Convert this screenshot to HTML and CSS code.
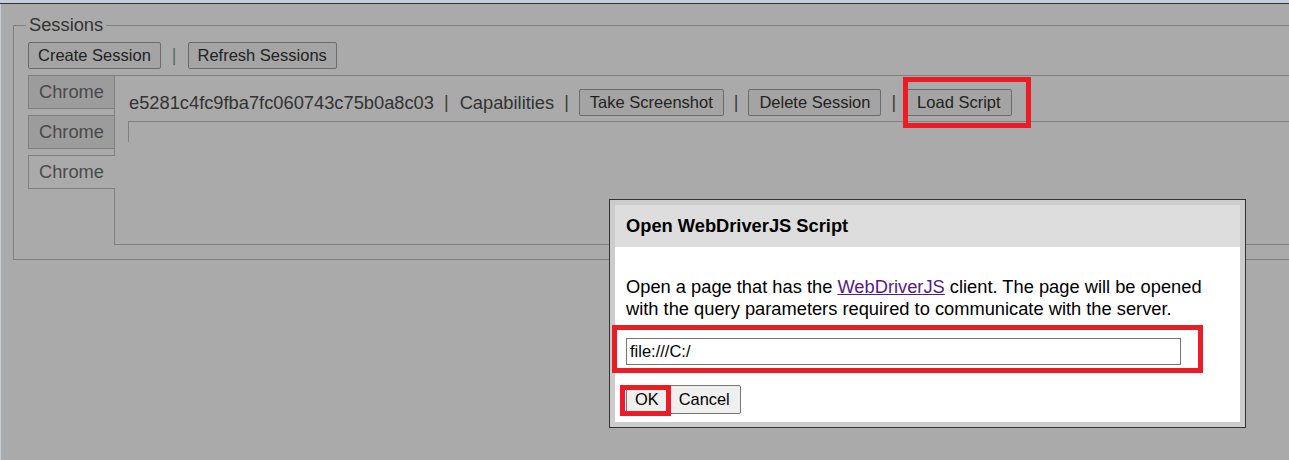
FILE: index.html
```html
<!DOCTYPE html>
<html lang="en">
<head>
<meta charset="utf-8">
<title>Sessions</title>
<link rel="stylesheet" href="styles.css">
</head>
<body>
<div class="strip"></div>
<div class="page">
  <fieldset class="sessions">
    <legend>Sessions</legend>
    <div class="toolbar">
      <button class="btn">Create Session</button>
      <span class="sep light">|</span>
      <button class="btn">Refresh Sessions</button>
    </div>
    <div class="session-view">
      <div class="tabs">
        <div class="tab">Chrome</div>
        <div class="tab">Chrome</div>
        <div class="tab active">Chrome</div>
      </div>
      <div class="panel">
        <div class="row">
          <span class="sid">e5281c4fc9fba7fc060743c75b0a8c03</span>
          <span class="sep">|</span>
          <span class="sid">Capabilities</span>
          <span class="sep">|</span>
          <button class="btn wide">Take Screenshot</button>
          <span class="sep">|</span>
          <button class="btn wide">Delete Session</button>
          <span class="sep">|</span>
          <button class="btn wide">Load Script</button>
        </div>
        <div class="box"></div>
      </div>
    </div>
  </fieldset>
</div>

<div class="dialog">
  <div class="dlg-head">Open WebDriverJS Script</div>
  <div class="dlg-body">
    <p>Open a page that has the <a href="#">WebDriverJS</a> client. The page will be opened with the query parameters required to communicate with the server.</p>
    <input class="url" type="text" value="file:///C:/">
    <div class="actions">
      <button class="dlg-btn ok">OK</button>
      <button class="dlg-btn cancel">Cancel</button>
    </div>
  </div>
</div>

<div class="mark mark-load"></div>
<div class="mark mark-input"></div>
<div class="mark mark-ok"></div>
</body>
</html>
```

FILE: styles.css
```css
html, body {
  margin: 0;
  padding: 0;
}
body {
  width: 1289px;
  height: 460px;
  overflow: hidden;
  position: relative;
  background: #aaaaaa;
  font-family: "Liberation Sans", Arial, sans-serif;
  font-size: 18.3px;
  color: #333;
}
.strip {
  height: 3px;
  background: #c6cdda;
  border-bottom: 1px solid #2e3138;
}
.page {
  border-left: 1px solid #c6cdda;
  padding: 10px 0 0 12px;
  height: 456px;
  box-sizing: border-box;
}
.sessions {
  margin: 0;
  width: 1320px;
  min-width: 0;
  box-sizing: border-box;
  border: 1px solid #808080;
  padding: 6px 14px 14px 14px;
}
.sessions legend {
  margin-left: -2px;
  padding: 0 3px;
  line-height: 22px;
  font-size: 18.3px;
  color: #333;
}
.toolbar {
  display: flex;
  align-items: center;
  gap: 11px;
}
.btn {
  font-family: "Liberation Sans", Arial, sans-serif;
  font-size: 16.5px;
  height: 27px;
  padding: 0 9px;
  background: #a4a4a4;
  border: 1px solid #6b6b6b;
  border-radius: 2px;
  color: #222;
}
.btn.wide {
  padding: 0 10px;
}
.sep {
  font-size: 18px;
  color: #3a3a3a;
}
.sep.light {
  color: #5d6470;
}
.session-view {
  display: flex;
  margin-top: 6px;
}
.tabs {
  display: flex;
  flex-direction: column;
  gap: 6px;
  width: 86px;
  flex: none;
}
.tab {
  width: 86px;
  height: 34px;
  box-sizing: border-box;
  border: 1px solid #808080;
  border-right: none;
  background: #9c9c9c;
  color: #4a4a4a;
  padding-left: 10px;
  line-height: 31px;
  font-size: 18.3px;
}
.tab.active {
  width: 87px;
  margin-right: -1px;
  background: #aaaaaa;
  position: relative;
  z-index: 1;
}
.panel {
  flex: 1;
  height: 170px;
  box-sizing: border-box;
  border: 1px solid #808080;
  padding: 13px 0 0 13px;
}
.row {
  display: flex;
  align-items: center;
  gap: 10px;
  height: 27px;
}
.sid {
  color: #333;
  padding-left: 1px;
}
.box {
  margin-top: 5px;
  height: 20px;
  border-top: 1px solid #808080;
  border-left: 1px solid #808080;
}

.dialog {
  position: absolute;
  left: 609px;
  top: 199px;
  width: 637px;
  height: 229px;
  box-sizing: border-box;
  border: 1px solid #333;
  background: #cccccc;
  padding: 5px;
  display: flex;
  flex-direction: column;
}
.dlg-head {
  height: 42px;
  flex: none;
  background: #dddddd;
  padding: 0 11px;
  font-weight: bold;
  font-size: 18.3px;
  line-height: 42px;
  color: #000;
}
.dlg-body {
  flex: 1;
  background: #fff;
  padding: 29px 11px 0;
  color: #000;
}
.dlg-body p {
  margin: 0;
  font-size: 18.3px;
  line-height: 22px;
}
.dlg-body a {
  color: #551a8b;
  text-decoration: underline;
}
.url {
  display: block;
  margin-top: 18px;
  width: 555px;
  height: 27px;
  box-sizing: border-box;
  border: 1px solid #767676;
  padding: 0 3px;
  font-family: "Liberation Sans", Arial, sans-serif;
  font-size: 16.5px;
  color: #000;
  outline: none;
}
.actions {
  display: flex;
  margin-top: 20px;
}
.dlg-btn {
  height: 29px;
  background: #efefef;
  border: 1px solid #767676;
  border-radius: 2px;
  font-family: "Liberation Sans", Arial, sans-serif;
  font-size: 16.4px;
  color: #000;
}
.dlg-btn.ok {
  padding: 0 8px;
}
.dlg-btn.cancel {
  padding: 0 10px;
}

.mark {
  position: absolute;
  box-sizing: border-box;
  border: 5px solid #ed1c24;
}
.mark-load {
  left: 903px;
  top: 77px;
  width: 128px;
  height: 51px;
}
.mark-input {
  left: 612px;
  top: 325px;
  width: 591px;
  height: 48px;
}
.mark-ok {
  left: 620px;
  top: 385px;
  width: 51px;
  height: 31px;
}
```
